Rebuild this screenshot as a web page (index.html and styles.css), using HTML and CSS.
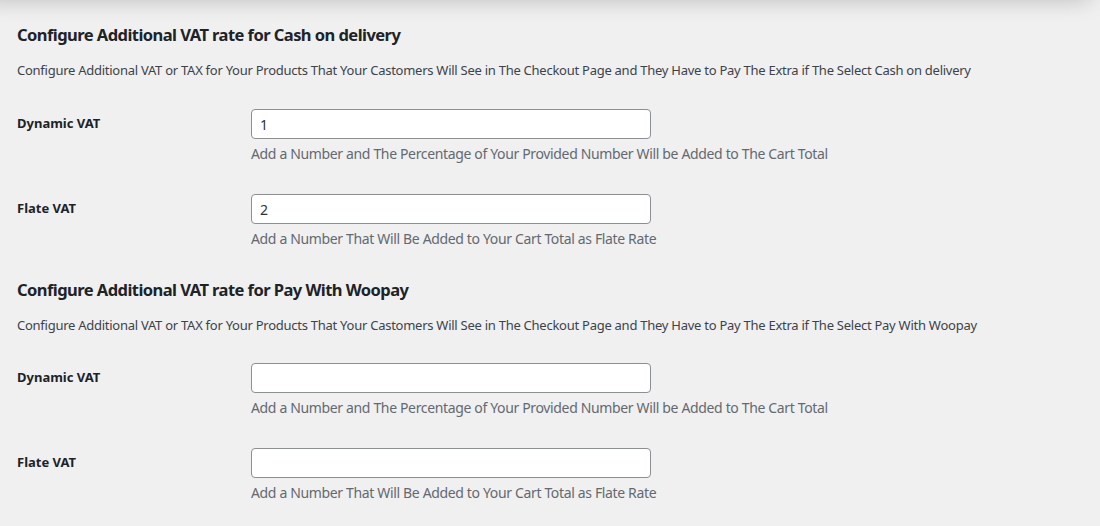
FILE: index.html
```html
<!DOCTYPE html>
<html lang="en">
<head>
<meta charset="utf-8">
<title>VAT settings</title>
<link rel="stylesheet" href="styles.css">
</head>
<body>
<div class="topbar-shadow"></div>
<div class="wrap">
  <section class="section">
    <h2 class="title">Configure Additional VAT rate for Cash on delivery</h2>
    <p class="intro">Configure Additional VAT or TAX for Your Products That Your Castomers Will See in The Checkout Page and They Have to Pay The Extra if The Select Cash on delivery</p>
    <div class="row">
      <label class="label" for="cod-dyn">Dynamic VAT</label>
      <div class="field">
        <input class="input" id="cod-dyn" type="text" value="1">
        <p class="help">Add a Number and The Percentage of Your Provided Number Will be Added to The Cart Total</p>
      </div>
    </div>
    <div class="row">
      <label class="label" for="cod-flat">Flate VAT</label>
      <div class="field">
        <input class="input" id="cod-flat" type="text" value="2">
        <p class="help">Add a Number That Will Be Added to Your Cart Total as Flate Rate</p>
      </div>
    </div>
  </section>
  <section class="section">
    <h2 class="title">Configure Additional VAT rate for Pay With Woopay</h2>
    <p class="intro">Configure Additional VAT or TAX for Your Products That Your Castomers Will See in The Checkout Page and They Have to Pay The Extra if The Select Pay With Woopay</p>
    <div class="row">
      <label class="label" for="wp-dyn">Dynamic VAT</label>
      <div class="field">
        <input class="input" id="wp-dyn" type="text" value="">
        <p class="help">Add a Number and The Percentage of Your Provided Number Will be Added to The Cart Total</p>
      </div>
    </div>
    <div class="row">
      <label class="label" for="wp-flat">Flate VAT</label>
      <div class="field">
        <input class="input" id="wp-flat" type="text" value="">
        <p class="help">Add a Number That Will Be Added to Your Cart Total as Flate Rate</p>
      </div>
    </div>
  </section>
</div>
</body>
</html>
```

FILE: styles.css
```css
html, body {
  margin: 0;
  padding: 0;
}
body {
  background: #f0f0f1;
  color: #3c434a;
  font-family: "Noto Sans", "Open Sans", sans-serif;
  font-size: 13px;
  overflow: hidden;
  position: relative;
  height: 526px;
}
.topbar-shadow {
  position: absolute;
  left: -20px;
  top: -40px;
  width: 1110px;
  height: 40px;
  box-shadow: 0 0 22px rgba(0, 0, 0, 0.22);
  background: #f0f0f1;
}
.wrap {
  padding: 0 17px;
}
.section {
  display: flex;
  flex-direction: column;
}
.title {
  margin: 23px 0 0;
  font-size: 16.5px;
  letter-spacing: -0.55px;
  line-height: 24px;
  font-weight: 700;
  color: #1d2327;
}
.section + .section .title {
  margin-top: 14px;
}
.intro {
  margin: 13px 0 14px;
  line-height: 20px;
  letter-spacing: -0.02em;
  color: #3c434a;
}
.section + .section .intro {
  margin-bottom: 13px;
}
.row {
  display: grid;
  grid-template-columns: 234px 400px;
  padding: 15px 0;
}
.label {
  padding-top: 5px;
  line-height: 18px;
  font-weight: 700;
  color: #1d2327;
}
.field {
  display: flex;
  flex-direction: column;
}
.input {
  box-sizing: border-box;
  width: 400px;
  height: 30px;
  margin: 0;
  padding: 0 8px;
  border: 1px solid #8c8f94;
  border-radius: 4px;
  background: #fff;
  color: #2c3338;
  font-family: inherit;
  font-size: 14px;
}
.help {
  margin: 5px 0 0;
  line-height: 20px;
  font-size: 14px;
  letter-spacing: -0.025em;
  color: #646970;
  white-space: nowrap;
}
```
